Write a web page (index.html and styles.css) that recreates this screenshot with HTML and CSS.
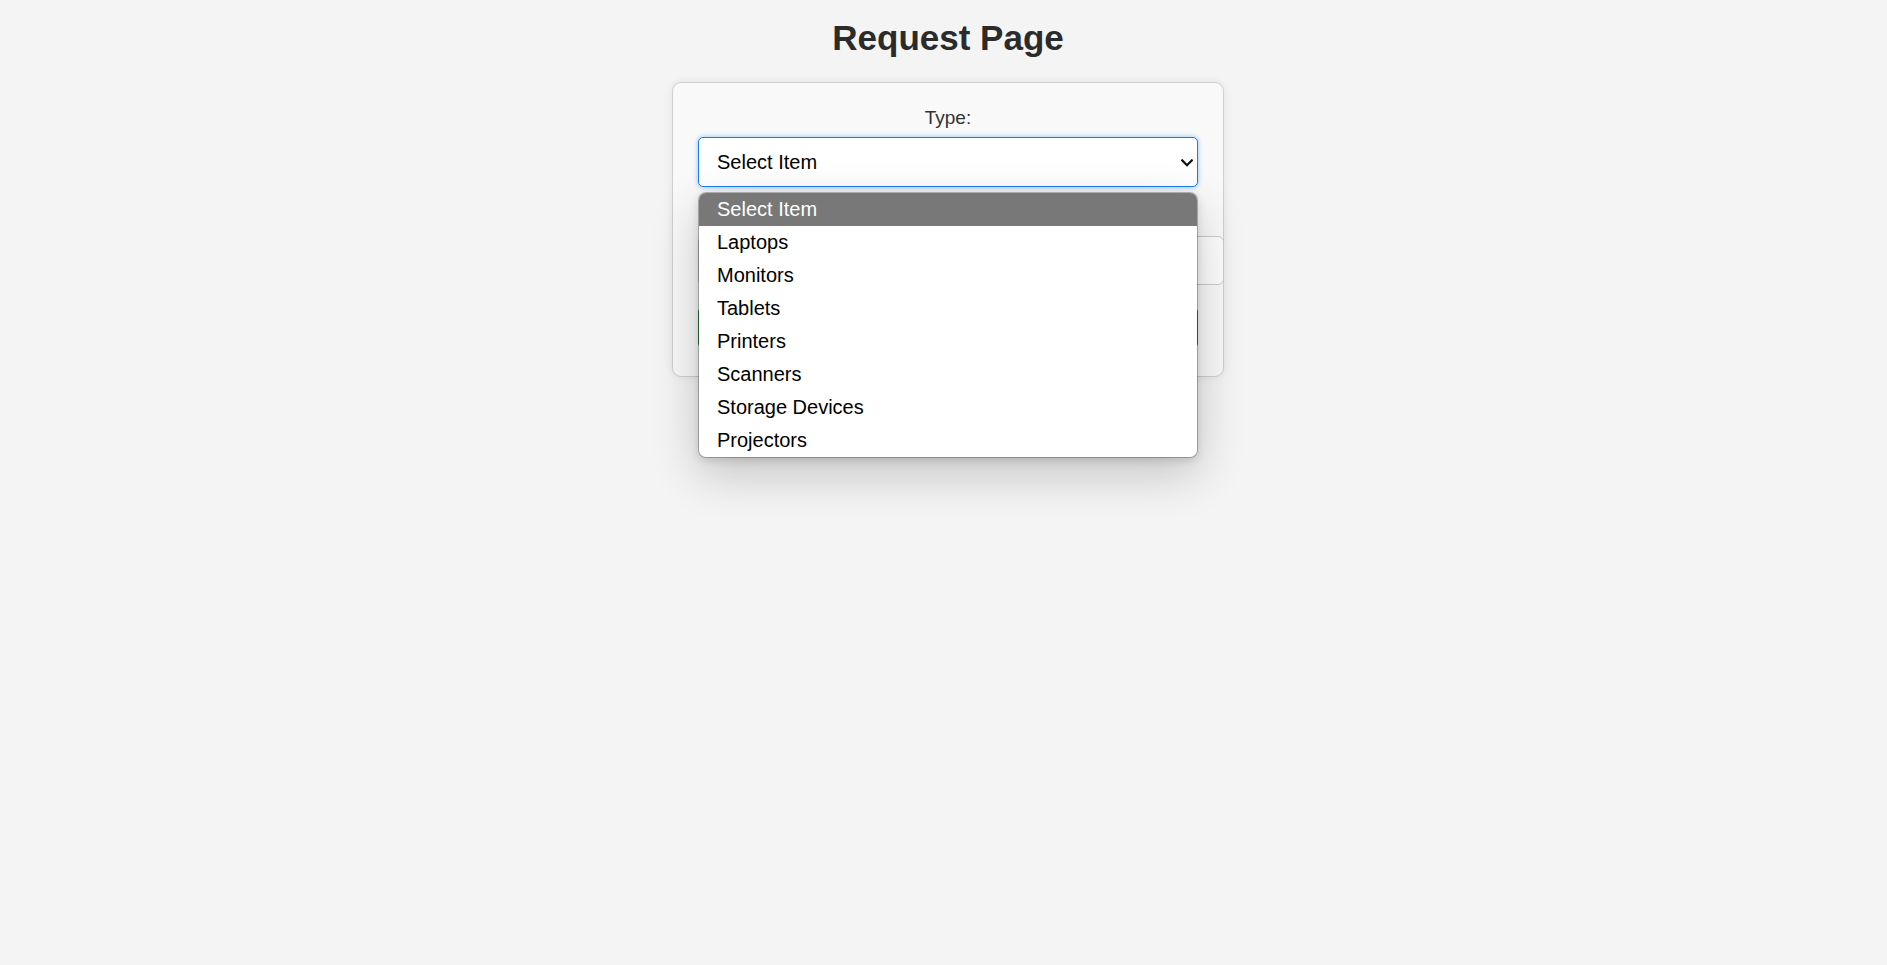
FILE: index.html
```html
<!DOCTYPE html>
<html lang="en">
<head>
<meta charset="utf-8">
<title>Request Page</title>
<link rel="stylesheet" href="styles.css">
</head>
<body>
  <main class="page">
    <h1 class="title">Request Page</h1>
    <form class="card">
      <label class="label" for="type">Type:</label>
      <div class="select-wrap">
        <select id="type" class="select">
          <option>Select Item</option>
          <option>Laptops</option>
          <option>Monitors</option>
          <option>Tablets</option>
          <option>Printers</option>
          <option>Scanners</option>
          <option>Storage Devices</option>
          <option>Projectors</option>
        </select>
        <svg class="chevron" width="12" height="8" viewBox="0 0 12 8" aria-hidden="true">
          <polyline points="1.2,1.4 6,6.2 10.8,1.4" fill="none" stroke="#111" stroke-width="2.2" stroke-linecap="square"/>
        </svg>
      </div>
      <input class="input" type="text" aria-label="Quantity">
      <button class="button" type="button"></button>
    </form>
  </main>
  <ul class="popup">
    <li class="opt opt-active">Select Item</li>
    <li class="opt">Laptops</li>
    <li class="opt">Monitors</li>
    <li class="opt">Tablets</li>
    <li class="opt">Printers</li>
    <li class="opt">Scanners</li>
    <li class="opt">Storage Devices</li>
    <li class="opt">Projectors</li>
  </ul>
</body>
</html>
```
FILE: styles.css
```css
* { box-sizing: border-box; }

html, body {
  margin: 0;
  padding: 0;
  background: #f4f4f4;
}

body {
  position: relative;
  min-height: 100vh;
  font-family: "Liberation Sans", Arial, sans-serif;
  color: #333;
  padding-left: 9px;
}

.page {
  display: flex;
  flex-direction: column;
  align-items: center;
}

.title {
  margin: 18px 0 0;
  font-size: 35px;
  line-height: 40px;
  font-weight: bold;
  color: #2b2b2b;
}

.card {
  margin-top: 24px;
  width: 552px;
  padding: 24px 25px 28px;
  background: #f9f9f9;
  border: 1px solid #cfcfcf;
  border-radius: 9px;
  box-shadow: 0 0 10px rgba(0, 0, 0, 0.08);
  display: flex;
  flex-direction: column;
  align-items: flex-start;
}

.label {
  align-self: stretch;
  text-align: center;
  font-size: 19px;
  line-height: 22px;
  color: #333;
  margin-bottom: 8px;
}

.select-wrap {
  position: relative;
  width: 500px;
}

.select {
  display: block;
  width: 100%;
  height: 50px;
  padding: 0 30px 0 18px;
  font-family: "Liberation Sans", Arial, sans-serif;
  font-size: 20px;
  color: #000;
  background: #fff;
  border: 1px solid #1a7cf0;
  border-radius: 5px;
  box-shadow: 0 0 5px rgba(0, 123, 255, 0.45);
  appearance: none;
  -webkit-appearance: none;
  outline: none;
}

.chevron {
  position: absolute;
  right: 5px;
  top: 22px;
  pointer-events: none;
}

/* native dropdown popup, drawn over the form */
.popup {
  position: absolute;
  top: 192px;
  left: calc(50% + 4.5px - 250px);
  width: 500px;
  margin: 0;
  padding: 0;
  list-style: none;
  background: #fff;
  background-clip: padding-box;
  border: 1px solid rgba(0, 0, 0, 0.25);
  border-radius: 8px;
  overflow: hidden;
  box-shadow: 0 16px 48px rgba(0, 0, 0, 0.2), 0 3px 8px rgba(0, 0, 0, 0.12);
  z-index: 10;
}

.opt {
  height: 33px;
  line-height: 33px;
  padding-left: 18px;
  font-size: 20px;
  color: #000;
  white-space: nowrap;
}

.opt-active {
  background: #787878;
  color: #fff;
}

.input {
  display: block;
  margin-top: 49px;
  width: 526px;
  height: 49px;
  padding: 12px;
  font-family: "Liberation Sans", Arial, sans-serif;
  font-size: 20px;
  background: #fdfdfd;
  border: 1px solid #cccccc;
  border-radius: 6px;
}

.button {
  display: block;
  margin-top: 22px;
  width: 500px;
  height: 41px;
  background: #2e8b3e;
  border: none;
  border-radius: 5px;
}
```
